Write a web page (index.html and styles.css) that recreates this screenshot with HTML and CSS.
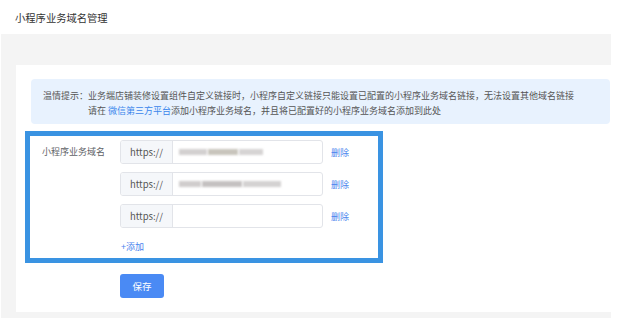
FILE: index.html
```html
<!DOCTYPE html>
<html lang="zh-CN">
<head>
<meta charset="utf-8">
<link rel="stylesheet" href="styles.css">
</head>
<body>
<div class="page">
  <div class="header">小程序业务域名管理</div>
  <div class="main">
    <div class="card">
      <div class="notice">
        <div class="line">温情提示：业务端店铺装修设置组件自定义链接时，小程序自定义链接只能设置已配置的小程序业务域名链接，无法设置其他域名链接</div>
        <div class="line indent">请在 <span class="link">微信第三方平台</span>添加小程序业务域名，并且将已配置好的小程序业务域名添加到此处</div>
      </div>
      <div class="highlight">
        <div class="form-item">
          <div class="label">小程序业务域名</div>
          <div class="fields">
            <div class="row">
              <div class="input-group">
                <div class="prepend">https://</div>
                <div class="input">
                  <span class="blur b1"></span><span class="blur b2"></span><span class="blur b3"></span>
                </div>
              </div>
              <a class="del">删除</a>
            </div>
            <div class="row">
              <div class="input-group">
                <div class="prepend">https://</div>
                <div class="input">
                  <span class="blur b4"></span><span class="blur b5"></span><span class="blur b6"></span>
                </div>
              </div>
              <a class="del">删除</a>
            </div>
            <div class="row">
              <div class="input-group">
                <div class="prepend">https://</div>
                <div class="input"></div>
              </div>
              <a class="del">删除</a>
            </div>
            <div class="add">+添加</div>
          </div>
        </div>
      </div>
      <button class="save">保存</button>
    </div>
  </div>
</div>
</body>
</html>
```
FILE: styles.css
```css
* { box-sizing: border-box; }
html, body { margin: 0; padding: 0; background: #fff; }
body {
  font-family: "Noto Sans CJK SC", "Noto Sans", sans-serif;
  color: #333;
}
.page {
  width: 610px;
  margin-left: 1px;
}
.header {
  height: 34px;
  display: flex;
  align-items: center;
  padding-left: 14px;
  font-size: 10.3px;
  color: #333;
}
.main {
  background: #f4f4f4;
  height: 284px;
  padding: 31px 0 6px 15px;
}
.card {
  background: #fff;
  height: 247px;
  padding: 14px 1px 0 15px;
}
.notice {
  height: 45px;
  background: #e8f2fe;
  border-radius: 4px;
  padding: 9px 0 0 12px;
  font-size: 9px;
  line-height: 15px;
  color: #555;
  white-space: nowrap;
}
.indent { padding-left: 45px; }
.link { color: #3a86ec; }
.highlight {
  margin: 7px 0 0 -6px;
  width: 358px;
  height: 132px;
  border: 5px solid #3a93e2;
  padding: 4px 0 0 12px;
}
.form-item { display: flex; }
.label {
  width: 78px;
  font-size: 9px;
  line-height: 24px;
  color: #606266;
}
.fields {
  display: flex;
  flex-direction: column;
  gap: 8px;
}
.row {
  display: flex;
  align-items: center;
  height: 24px;
}
.input-group {
  display: flex;
  width: 203px;
  height: 24px;
  border: 1px solid #e2e4e9;
  border-radius: 3px;
  overflow: hidden;
}
.prepend {
  width: 52px;
  background: #f5f7fa;
  border-right: 1px solid #e2e4e9;
  font-size: 9.5px;
  color: #555;
  display: flex;
  align-items: center;
  justify-content: center;
}
.input {
  flex: 1;
  display: flex;
  align-items: center;
  padding-left: 6px;
  gap: 1px;
}
.blur {
  display: inline-block;
  height: 6px;
  background: #c9c6c6;
  filter: blur(1.2px);
}
.b1 { width: 28px; background: #d3d0d0; }
.b2 { width: 30px; background: #c8c4bc; }
.b3 { width: 24px; background: #d6d4d4; }
.b4 { width: 22px; background: #d0cdcd; }
.b5 { width: 40px; background: #c4c1c1; }
.b6 { width: 38px; background: #d4d2d2; }
.del {
  margin-left: 8px;
  font-size: 9px;
  color: #4a83ee;
}
.add {
  margin-top: 2px;
  font-size: 9px;
  line-height: 18px;
  color: #4a83ee;
  padding-left: 1px;
}
.save {
  display: block;
  margin: 11px 0 0 89px;
  width: 44px;
  height: 24px;
  border: none;
  border-radius: 3px;
  background: #4a8af4;
  color: #fff;
  font-family: "Noto Sans CJK SC", sans-serif;
  font-size: 9.5px;
  padding: 0;
}
```
